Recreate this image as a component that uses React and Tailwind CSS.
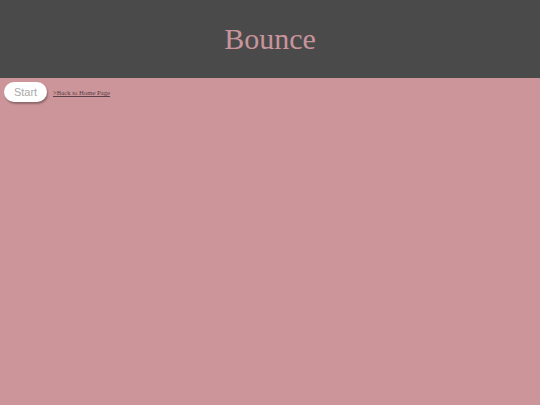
export default function App() {
  return (
    <div className="w-[540px] h-[405px] bg-[#cc959a] flex flex-col" style={{ fontFamily: '"Liberation Serif", serif' }}>
      <header className="h-[78px] bg-[#4a4a4a] flex items-center justify-center">
        <h1 className="text-[30px] text-[#c8949b] leading-none font-['Liberation_Serif',serif]">Bounce</h1>
      </header>
      <div className="flex items-center gap-[6px] pl-[4px] pt-[4px]">
        <button className="w-[43px] h-[20px] rounded-[10px] bg-white text-[#aaaaaa] text-[11px] font-['Liberation_Sans',sans-serif] shadow-[1px_2px_2px_rgba(0,0,0,0.3)]">
          Start
        </button>
        <a href="#" className="text-[6.7px] text-[#5a4048] underline mt-[2px] font-['Liberation_Serif',serif]">&gt;Back to Home Page</a>
      </div>
    </div>
  );
}
